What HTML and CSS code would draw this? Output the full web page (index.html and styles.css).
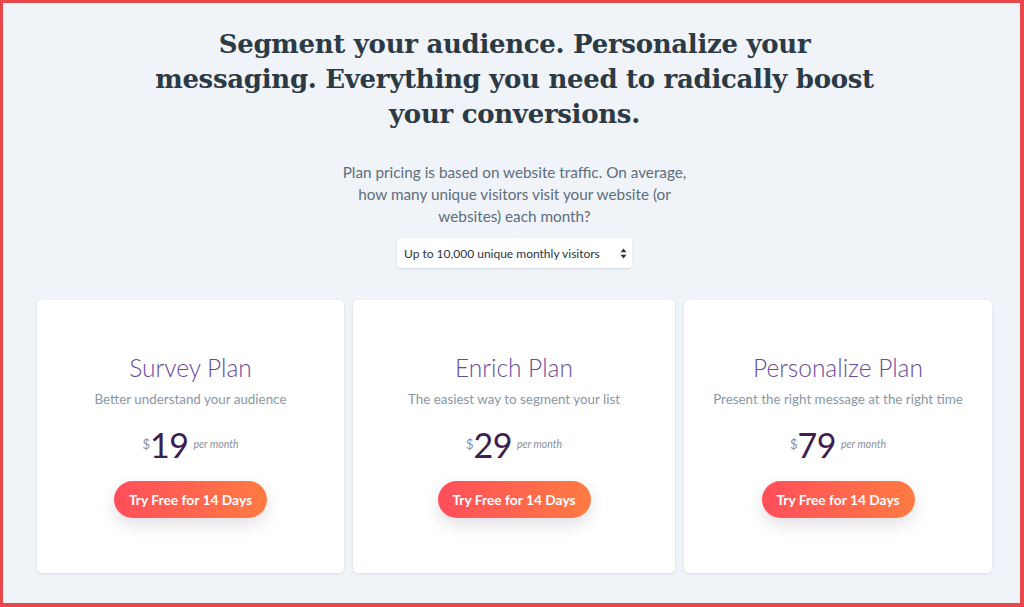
FILE: index.html
```html
<!DOCTYPE html>
<html lang="en">
<head>
<meta charset="utf-8">
<title>Pricing</title>
<link rel="stylesheet" href="styles.css">
</head>
<body>
<div class="frame">
  <header class="hero">
    <h1 class="headline">Segment your audience. Personalize your messaging. Everything you need to radically boost your conversions.</h1>
    <p class="lead">Plan pricing is based on website traffic. On average, how many unique visitors visit your website (or websites) each month?</p>
    <div class="select">
      <span class="select-label">Up to 10,000 unique monthly visitors</span>
      <svg class="select-arrows" width="7" height="11" viewBox="0 0 7 11"><path d="M3.5 0.5 L6.5 4.3 H0.5 Z M3.5 10.5 L6.5 6.7 H0.5 Z" fill="#2c3440"/></svg>
    </div>
  </header>
  <section class="plans">
    <article class="card">
      <h2 class="plan-name">Survey Plan</h2>
      <p class="plan-desc">Better understand your audience</p>
      <div class="price"><span class="cur">$</span><span class="amount">19</span><span class="per">per month</span></div>
      <a class="cta" href="#">Try Free for 14 Days</a>
    </article>
    <article class="card">
      <h2 class="plan-name">Enrich Plan</h2>
      <p class="plan-desc">The easiest way to segment your list</p>
      <div class="price"><span class="cur">$</span><span class="amount">29</span><span class="per">per month</span></div>
      <a class="cta" href="#">Try Free for 14 Days</a>
    </article>
    <article class="card">
      <h2 class="plan-name">Personalize Plan</h2>
      <p class="plan-desc">Present the right message at the right time</p>
      <div class="price"><span class="cur">$</span><span class="amount">79</span><span class="per">per month</span></div>
      <a class="cta" href="#">Try Free for 14 Days</a>
    </article>
  </section>
</div>
</body>
</html>
```

FILE: styles.css
```css
* { box-sizing: border-box; }
html, body { margin: 0; padding: 0; }
body {
  font-family: Lato, "Noto Sans", sans-serif;
  background: #f0f3f8;
}
.frame {
  width: 1024px;
  height: 607px;
  overflow: hidden;
  border-style: solid;
  border-color: #e8474b;
  border-width: 3px 4px 4px 3px;
  background: #f0f3f8;
  padding: 24px 28px 0 34px;
}
.hero {
  display: flex;
  flex-direction: column;
  align-items: center;
  text-align: center;
}
.headline {
  margin: 0;
  width: 760px;
  font-family: "DejaVu Serif", "Liberation Serif", serif;
  font-weight: bold;
  font-size: 26px;
  line-height: 35px;
  letter-spacing: -0.3px;
  color: #2b3a45;
}
.lead {
  margin: 29px 0 0;
  width: 356px;
  font-size: 15.3px;
  line-height: 22px;
  color: #5e6f7d;
}
.select {
  margin-top: 11px;
  width: 235px;
  height: 30px;
  background: #fff;
  border-radius: 4px;
  box-shadow: 0 1px 2px rgba(40, 60, 90, 0.15);
  display: flex;
  align-items: center;
  justify-content: space-between;
  padding: 0 5px 0 7px;
  font-size: 12px;
  color: #2c3440;
}
.plans {
  margin-top: 32px;
  display: grid;
  grid-template-columns: 307px 322px 308px;
  gap: 9px;
}
.card {
  background: #fff;
  border-radius: 5px;
  box-shadow: 0 1px 3px rgba(60, 80, 110, 0.12);
  height: 273px;
  display: flex;
  flex-direction: column;
  align-items: center;
  padding-top: 52px;
}
.plan-name {
  margin: 0;
  font-weight: 300;
  font-size: 24.5px;
  line-height: 32px;
  color: #6a4a9e;
}
.plan-desc {
  margin: 7px 0 0;
  font-size: 13.4px;
  line-height: 16px;
  color: #8a97a6;
}
.price {
  margin-top: 21px;
  display: flex;
  align-items: center;
  height: 34px;
}
.cur {
  font-size: 13px;
  color: #8a8f9e;
  align-self: flex-start;
  margin-top: 8px;
  margin-right: 0;
}
.amount {
  font-weight: 400;
  font-size: 34px;
  line-height: 34px;
  letter-spacing: -0.5px;
  color: #3d1d52;
}
.per {
  margin-left: 5px;
  margin-top: -2px;
  font-style: italic;
  font-size: 10.5px;
  color: #8a8f9e;
}
.cta {
  margin-top: 19px;
  width: 153px;
  height: 37px;
  border-radius: 19px;
  background: linear-gradient(90deg, #ff4e5b 0%, #ff7b42 100%);
  box-shadow: 0 7px 16px rgba(80, 60, 90, 0.16);
  display: flex;
  align-items: center;
  justify-content: center;
  color: #fff;
  font-weight: bold;
  font-size: 13.8px;
  text-decoration: none;
}
```
